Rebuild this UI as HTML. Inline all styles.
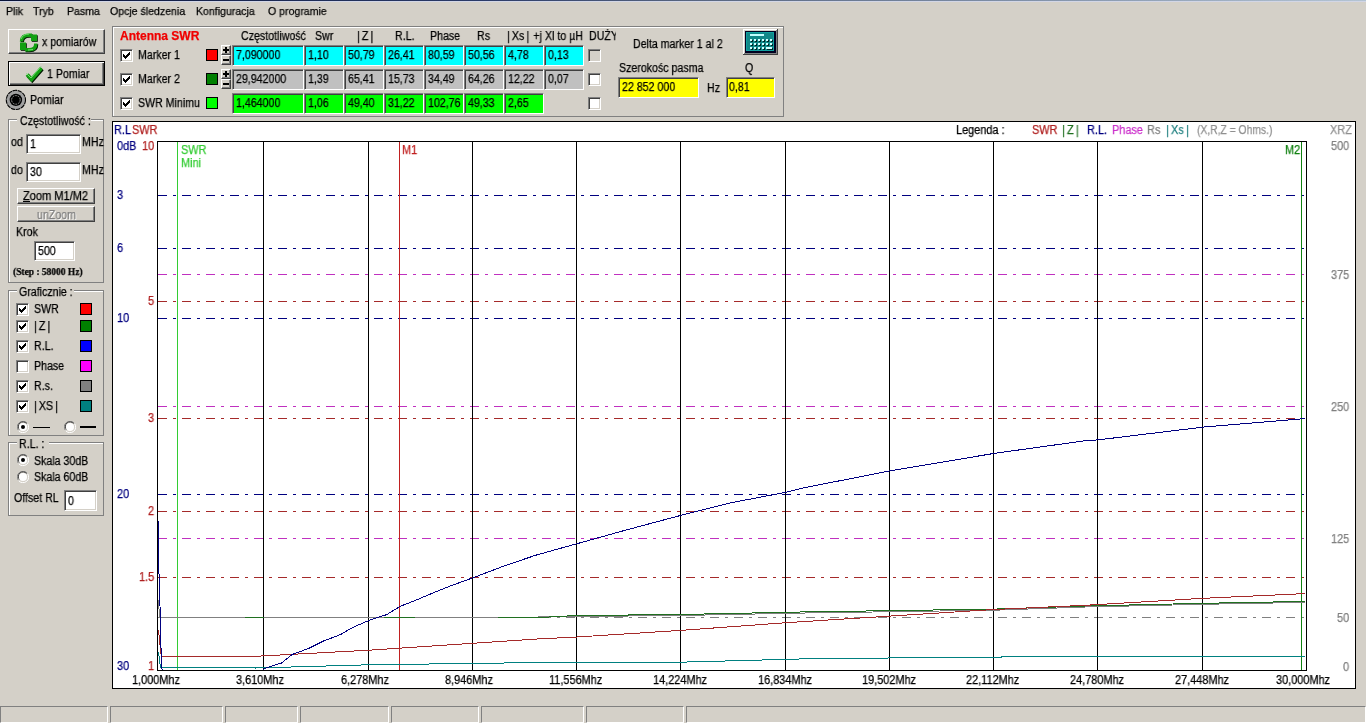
<!DOCTYPE html><html><head><meta charset="utf-8"><style>
html,body{margin:0;padding:0;}
body{width:1366px;height:723px;overflow:hidden;background:#d4d0c8;position:relative;font-family:"Liberation Sans", sans-serif;}
.t{position:absolute;white-space:pre;line-height:1;-webkit-font-smoothing:antialiased;will-change:transform;-webkit-text-stroke:0.25px currentColor;}
</style></head><body>
<div style="position:absolute;left:0px;top:0px;width:1366px;height:1px;background:linear-gradient(90deg,#081236 0%,#2a3a68 35%,#56647f 50%,#8090a8 75%,#b4c4d4 100%);"></div>
<div style="position:absolute;left:0px;top:1px;width:1366px;height:1px;background:#d2d6e6;"></div>
<div class="t" style="left:6px;top:5.69px;font-size:11px;color:#000;transform:scaleX(0.96);transform-origin:0 0;">Plik</div>
<div class="t" style="left:33px;top:5.69px;font-size:11px;color:#000;transform:scaleX(0.96);transform-origin:0 0;">Tryb</div>
<div class="t" style="left:67px;top:5.69px;font-size:11px;color:#000;transform:scaleX(0.96);transform-origin:0 0;">Pasma</div>
<div class="t" style="left:110px;top:5.69px;font-size:11px;color:#000;transform:scaleX(0.96);transform-origin:0 0;">Opcje śledzenia</div>
<div class="t" style="left:196px;top:5.69px;font-size:11px;color:#000;transform:scaleX(0.96);transform-origin:0 0;">Konfiguracja</div>
<div class="t" style="left:268px;top:5.69px;font-size:11px;color:#000;transform:scaleX(0.96);transform-origin:0 0;">O programie</div>
<div style="position:absolute;left:8px;top:29px;width:97px;height:25px;background:#d4d0c8;box-sizing:border-box;border-style:solid;border-width:1px;border-color:#fff #404040 #404040 #fff;box-shadow:inset -1px -1px 0 #808080;"></div>
<div class="t" style="left:42px;top:35.84px;font-size:12px;color:#000;transform:scaleX(0.885);transform-origin:0 0;">x pomiarów</div>
<div style="position:absolute;left:8px;top:61px;width:97px;height:25px;background:#d4d0c8;box-sizing:border-box;border:1px solid #000;box-shadow:inset 1px 1px 0 #fff, inset -1px -1px 0 #404040, inset -2px -2px 0 #808080;"></div>
<div class="t" style="left:47px;top:67.84px;font-size:12px;color:#000;transform:scaleX(0.885);transform-origin:0 0;">1 Pomiar</div>
<svg style="position:absolute;left:16px;top:30px" width="26" height="24" viewBox="0 0 26 24">
<g transform="translate(0.8,0.8)" fill="none" stroke="#001800" stroke-width="3.4">
<path d="M5.5 11.5 C5.5 7, 8.5 5.2, 12.5 5.2 L16 5.2"/>
<path d="M19.8 13.5 C19.8 18, 17 19.8, 13 19.8 L9 19.8"/>
</g>
<g transform="translate(0.8,0.8)" fill="#001800"><rect x="15" y="4.5" width="6" height="6.5"/><rect x="4" y="12.5" width="6" height="7.5"/></g>
<g fill="none" stroke="#12a012" stroke-width="3.4">
<path d="M5.5 11.5 C5.5 7, 8.5 5.2, 12.5 5.2 L16 5.2"/>
<path d="M19.8 13.5 C19.8 18, 17 19.8, 13 19.8 L9 19.8"/>
</g>
<g fill="#12a012"><rect x="15" y="4.5" width="6" height="6.5"/><rect x="4" y="12.5" width="6" height="7.5"/></g>
<path d="M5 9 C6 6, 9 4, 13 4" fill="none" stroke="#70e070" stroke-width="1"/>
<path d="M12 20 L17 19.5" fill="none" stroke="#70e070" stroke-width="1"/>
</svg>
<svg style="position:absolute;left:22px;top:62px" width="26" height="22" viewBox="0 0 26 22">
<path d="M5 12.5 L9.5 17.5 L19.5 6" fill="none" stroke="#001800" stroke-width="3.6" transform="translate(0.8,1)"/>
<path d="M5 12.5 L9.5 17.5 L19.5 6" fill="none" stroke="#14a014" stroke-width="3.6"/>
<path d="M4.5 11.5 L9 16 L19 4.5" fill="none" stroke="#70e070" stroke-width="1"/>
</svg>
<svg style="position:absolute;left:5px;top:89px" width="22" height="22" viewBox="0 0 22 22">
<circle cx="10.9" cy="10.9" r="9.6" fill="#a0a0a0" stroke="#000" stroke-width="1.1" stroke-dasharray="4.5 0.7"/>
<circle cx="10.9" cy="10.9" r="6.2" fill="#000"/>
<circle cx="10.9" cy="10.9" r="3.6" fill="#000"/>
<circle cx="10.9" cy="10.9" r="4.3" fill="none" stroke="#a8a8a8" stroke-width="0.9" stroke-dasharray="1.8 0.9"/>
</svg>
<div class="t" style="left:30px;top:93.84px;font-size:12px;color:#000;transform:scaleX(0.885);transform-origin:0 0;">Pomiar</div>
<div style="position:absolute;left:113px;top:27px;width:671px;height:90px;border:1px solid #fff;box-sizing:border-box;"></div>
<div style="position:absolute;left:112px;top:26px;width:672px;height:91px;border:1px solid #808080;box-sizing:border-box;"></div>
<div class="t" style="left:120px;top:29.84px;font-size:12px;color:#f00000;font-weight:700;">Antenna SWR</div>
<div class="t" style="left:241px;top:29.84px;font-size:12px;color:#000;transform:scaleX(0.885);transform-origin:0 0;">Częstotliwość</div>
<div class="t" style="left:315px;top:29.84px;font-size:12px;color:#000;transform:scaleX(0.885);transform-origin:0 0;">Swr</div>
<div class="t" style="left:357px;top:29.84px;font-size:12px;color:#000;transform:scaleX(0.885);transform-origin:0 0;">|&#8201;Z&#8201;|</div>
<div class="t" style="left:395px;top:29.84px;font-size:12px;color:#000;transform:scaleX(0.885);transform-origin:0 0;">R.L.</div>
<div class="t" style="left:430px;top:29.84px;font-size:12px;color:#000;transform:scaleX(0.885);transform-origin:0 0;">Phase</div>
<div class="t" style="left:477px;top:29.84px;font-size:12px;color:#000;transform:scaleX(0.885);transform-origin:0 0;">Rs</div>
<div class="t" style="left:507px;top:29.84px;font-size:12px;color:#000;transform:scaleX(0.885);transform-origin:0 0;">|&#8201;Xs&#8201;|&#8201;&#8201;+j</div>
<div class="t" style="left:545px;top:29.84px;font-size:12px;color:#000;transform:scaleX(0.885);transform-origin:0 0;">Xl to µH</div>
<div class="t" style="left:589px;top:29.84px;font-size:12px;color:#000;transform:scaleX(0.885);transform-origin:0 0;width:31px;overflow:hidden;padding-top:4px;margin-top:-4px;">DUŻY</div>
<div style="position:absolute;left:120px;top:49px;width:13px;height:13px;background:#fff;box-sizing:border-box;border-style:solid;border-width:1px;border-color:#808080 #fff #fff #808080;box-shadow:inset 1px 1px 0 #404040, inset -1px -1px 0 #d4d0c8;"></div>
<div style="position:absolute;left:123px;top:54px;width:1px;height:3px;background:#000;"></div>
<div style="position:absolute;left:124px;top:55px;width:1px;height:3px;background:#000;"></div>
<div style="position:absolute;left:125px;top:56px;width:1px;height:3px;background:#000;"></div>
<div style="position:absolute;left:126px;top:55px;width:1px;height:3px;background:#000;"></div>
<div style="position:absolute;left:127px;top:54px;width:1px;height:3px;background:#000;"></div>
<div style="position:absolute;left:128px;top:53px;width:1px;height:3px;background:#000;"></div>
<div style="position:absolute;left:129px;top:52px;width:1px;height:3px;background:#000;"></div>
<div class="t" style="left:138px;top:48.84px;font-size:12px;color:#000;transform:scaleX(0.885);transform-origin:0 0;">Marker 1</div>
<div style="position:absolute;left:206px;top:49px;width:12px;height:12px;background:#ff0000;border:1px solid #000;box-sizing:border-box;"></div>
<div style="position:absolute;left:221px;top:45px;width:10px;height:10px;background:#d4d0c8;box-sizing:border-box;border-style:solid;border-width:1px;border-color:#fff #404040 #404040 #fff;box-shadow:inset -1px -1px 0 #808080;"></div>
<div style="position:absolute;left:221px;top:55px;width:10px;height:10px;background:#d4d0c8;box-sizing:border-box;border-style:solid;border-width:1px;border-color:#fff #404040 #404040 #fff;box-shadow:inset -1px -1px 0 #808080;"></div>
<div style="position:absolute;left:223px;top:49px;width:6px;height:2px;background:#000;"></div>
<div style="position:absolute;left:225px;top:47px;width:2px;height:6px;background:#000;"></div>
<div style="position:absolute;left:223px;top:59px;width:6px;height:2px;background:#000;"></div>
<div style="position:absolute;left:232px;top:45px;width:72px;height:21px;background:#00ffff;box-sizing:border-box;border-style:solid;border-width:1px;border-color:#808080 #fff #fff #808080;box-shadow:inset 1px 1px 0 #404040;"></div>
<div class="t" style="left:236px;top:48.84px;font-size:12px;color:#000;transform:scaleX(0.885);transform-origin:0 0;">7,090000</div>
<div style="position:absolute;left:304px;top:45px;width:40px;height:21px;background:#00ffff;box-sizing:border-box;border-style:solid;border-width:1px;border-color:#808080 #fff #fff #808080;box-shadow:inset 1px 1px 0 #404040;"></div>
<div class="t" style="left:308px;top:48.84px;font-size:12px;color:#000;transform:scaleX(0.885);transform-origin:0 0;">1,10</div>
<div style="position:absolute;left:344px;top:45px;width:40px;height:21px;background:#00ffff;box-sizing:border-box;border-style:solid;border-width:1px;border-color:#808080 #fff #fff #808080;box-shadow:inset 1px 1px 0 #404040;"></div>
<div class="t" style="left:348px;top:48.84px;font-size:12px;color:#000;transform:scaleX(0.885);transform-origin:0 0;">50,79</div>
<div style="position:absolute;left:384px;top:45px;width:40px;height:21px;background:#00ffff;box-sizing:border-box;border-style:solid;border-width:1px;border-color:#808080 #fff #fff #808080;box-shadow:inset 1px 1px 0 #404040;"></div>
<div class="t" style="left:388px;top:48.84px;font-size:12px;color:#000;transform:scaleX(0.885);transform-origin:0 0;">26,41</div>
<div style="position:absolute;left:424px;top:45px;width:40px;height:21px;background:#00ffff;box-sizing:border-box;border-style:solid;border-width:1px;border-color:#808080 #fff #fff #808080;box-shadow:inset 1px 1px 0 #404040;"></div>
<div class="t" style="left:428px;top:48.84px;font-size:12px;color:#000;transform:scaleX(0.885);transform-origin:0 0;">80,59</div>
<div style="position:absolute;left:464px;top:45px;width:40px;height:21px;background:#00ffff;box-sizing:border-box;border-style:solid;border-width:1px;border-color:#808080 #fff #fff #808080;box-shadow:inset 1px 1px 0 #404040;"></div>
<div class="t" style="left:468px;top:48.84px;font-size:12px;color:#000;transform:scaleX(0.885);transform-origin:0 0;">50,56</div>
<div style="position:absolute;left:504px;top:45px;width:40px;height:21px;background:#00ffff;box-sizing:border-box;border-style:solid;border-width:1px;border-color:#808080 #fff #fff #808080;box-shadow:inset 1px 1px 0 #404040;"></div>
<div class="t" style="left:508px;top:48.84px;font-size:12px;color:#000;transform:scaleX(0.885);transform-origin:0 0;">4,78</div>
<div style="position:absolute;left:544px;top:45px;width:40px;height:21px;background:#00ffff;box-sizing:border-box;border-style:solid;border-width:1px;border-color:#808080 #fff #fff #808080;box-shadow:inset 1px 1px 0 #404040;"></div>
<div class="t" style="left:548px;top:48.84px;font-size:12px;color:#000;transform:scaleX(0.885);transform-origin:0 0;">0,13</div>
<div style="position:absolute;left:588px;top:49px;width:13px;height:13px;background:#d4d0c8;box-sizing:border-box;border-style:solid;border-width:1px;border-color:#808080 #fff #fff #808080;box-shadow:inset 1px 1px 0 #404040, inset -1px -1px 0 #d4d0c8;"></div>
<div style="position:absolute;left:120px;top:73px;width:13px;height:13px;background:#fff;box-sizing:border-box;border-style:solid;border-width:1px;border-color:#808080 #fff #fff #808080;box-shadow:inset 1px 1px 0 #404040, inset -1px -1px 0 #d4d0c8;"></div>
<div style="position:absolute;left:123px;top:78px;width:1px;height:3px;background:#000;"></div>
<div style="position:absolute;left:124px;top:79px;width:1px;height:3px;background:#000;"></div>
<div style="position:absolute;left:125px;top:80px;width:1px;height:3px;background:#000;"></div>
<div style="position:absolute;left:126px;top:79px;width:1px;height:3px;background:#000;"></div>
<div style="position:absolute;left:127px;top:78px;width:1px;height:3px;background:#000;"></div>
<div style="position:absolute;left:128px;top:77px;width:1px;height:3px;background:#000;"></div>
<div style="position:absolute;left:129px;top:76px;width:1px;height:3px;background:#000;"></div>
<div class="t" style="left:138px;top:72.84px;font-size:12px;color:#000;transform:scaleX(0.885);transform-origin:0 0;">Marker 2</div>
<div style="position:absolute;left:206px;top:73px;width:12px;height:12px;background:#008000;border:1px solid #000;box-sizing:border-box;"></div>
<div style="position:absolute;left:221px;top:69px;width:10px;height:10px;background:#d4d0c8;box-sizing:border-box;border-style:solid;border-width:1px;border-color:#fff #404040 #404040 #fff;box-shadow:inset -1px -1px 0 #808080;"></div>
<div style="position:absolute;left:221px;top:79px;width:10px;height:10px;background:#d4d0c8;box-sizing:border-box;border-style:solid;border-width:1px;border-color:#fff #404040 #404040 #fff;box-shadow:inset -1px -1px 0 #808080;"></div>
<div style="position:absolute;left:223px;top:73px;width:6px;height:2px;background:#000;"></div>
<div style="position:absolute;left:225px;top:71px;width:2px;height:6px;background:#000;"></div>
<div style="position:absolute;left:223px;top:83px;width:6px;height:2px;background:#000;"></div>
<div style="position:absolute;left:232px;top:69px;width:72px;height:21px;background:#c0c0c0;box-sizing:border-box;border-style:solid;border-width:1px;border-color:#808080 #fff #fff #808080;box-shadow:inset 1px 1px 0 #404040;"></div>
<div class="t" style="left:236px;top:72.84px;font-size:12px;color:#000;transform:scaleX(0.885);transform-origin:0 0;">29,942000</div>
<div style="position:absolute;left:304px;top:69px;width:40px;height:21px;background:#c0c0c0;box-sizing:border-box;border-style:solid;border-width:1px;border-color:#808080 #fff #fff #808080;box-shadow:inset 1px 1px 0 #404040;"></div>
<div class="t" style="left:308px;top:72.84px;font-size:12px;color:#000;transform:scaleX(0.885);transform-origin:0 0;">1,39</div>
<div style="position:absolute;left:344px;top:69px;width:40px;height:21px;background:#c0c0c0;box-sizing:border-box;border-style:solid;border-width:1px;border-color:#808080 #fff #fff #808080;box-shadow:inset 1px 1px 0 #404040;"></div>
<div class="t" style="left:348px;top:72.84px;font-size:12px;color:#000;transform:scaleX(0.885);transform-origin:0 0;">65,41</div>
<div style="position:absolute;left:384px;top:69px;width:40px;height:21px;background:#c0c0c0;box-sizing:border-box;border-style:solid;border-width:1px;border-color:#808080 #fff #fff #808080;box-shadow:inset 1px 1px 0 #404040;"></div>
<div class="t" style="left:388px;top:72.84px;font-size:12px;color:#000;transform:scaleX(0.885);transform-origin:0 0;">15,73</div>
<div style="position:absolute;left:424px;top:69px;width:40px;height:21px;background:#c0c0c0;box-sizing:border-box;border-style:solid;border-width:1px;border-color:#808080 #fff #fff #808080;box-shadow:inset 1px 1px 0 #404040;"></div>
<div class="t" style="left:428px;top:72.84px;font-size:12px;color:#000;transform:scaleX(0.885);transform-origin:0 0;">34,49</div>
<div style="position:absolute;left:464px;top:69px;width:40px;height:21px;background:#c0c0c0;box-sizing:border-box;border-style:solid;border-width:1px;border-color:#808080 #fff #fff #808080;box-shadow:inset 1px 1px 0 #404040;"></div>
<div class="t" style="left:468px;top:72.84px;font-size:12px;color:#000;transform:scaleX(0.885);transform-origin:0 0;">64,26</div>
<div style="position:absolute;left:504px;top:69px;width:40px;height:21px;background:#c0c0c0;box-sizing:border-box;border-style:solid;border-width:1px;border-color:#808080 #fff #fff #808080;box-shadow:inset 1px 1px 0 #404040;"></div>
<div class="t" style="left:508px;top:72.84px;font-size:12px;color:#000;transform:scaleX(0.885);transform-origin:0 0;">12,22</div>
<div style="position:absolute;left:544px;top:69px;width:40px;height:21px;background:#c0c0c0;box-sizing:border-box;border-style:solid;border-width:1px;border-color:#808080 #fff #fff #808080;box-shadow:inset 1px 1px 0 #404040;"></div>
<div class="t" style="left:548px;top:72.84px;font-size:12px;color:#000;transform:scaleX(0.885);transform-origin:0 0;">0,07</div>
<div style="position:absolute;left:588px;top:73px;width:13px;height:13px;background:#fff;box-sizing:border-box;border-style:solid;border-width:1px;border-color:#808080 #fff #fff #808080;box-shadow:inset 1px 1px 0 #404040, inset -1px -1px 0 #d4d0c8;"></div>
<div style="position:absolute;left:120px;top:97px;width:13px;height:13px;background:#fff;box-sizing:border-box;border-style:solid;border-width:1px;border-color:#808080 #fff #fff #808080;box-shadow:inset 1px 1px 0 #404040, inset -1px -1px 0 #d4d0c8;"></div>
<div style="position:absolute;left:123px;top:102px;width:1px;height:3px;background:#000;"></div>
<div style="position:absolute;left:124px;top:103px;width:1px;height:3px;background:#000;"></div>
<div style="position:absolute;left:125px;top:104px;width:1px;height:3px;background:#000;"></div>
<div style="position:absolute;left:126px;top:103px;width:1px;height:3px;background:#000;"></div>
<div style="position:absolute;left:127px;top:102px;width:1px;height:3px;background:#000;"></div>
<div style="position:absolute;left:128px;top:101px;width:1px;height:3px;background:#000;"></div>
<div style="position:absolute;left:129px;top:100px;width:1px;height:3px;background:#000;"></div>
<div class="t" style="left:138px;top:96.84px;font-size:12px;color:#000;transform:scaleX(0.885);transform-origin:0 0;">SWR Minimu</div>
<div style="position:absolute;left:206px;top:97px;width:12px;height:12px;background:#00ff00;border:1px solid #000;box-sizing:border-box;"></div>
<div style="position:absolute;left:232px;top:93px;width:72px;height:21px;background:#00ff00;box-sizing:border-box;border-style:solid;border-width:1px;border-color:#808080 #fff #fff #808080;box-shadow:inset 1px 1px 0 #404040;"></div>
<div class="t" style="left:236px;top:96.84px;font-size:12px;color:#000;transform:scaleX(0.885);transform-origin:0 0;">1,464000</div>
<div style="position:absolute;left:304px;top:93px;width:40px;height:21px;background:#00ff00;box-sizing:border-box;border-style:solid;border-width:1px;border-color:#808080 #fff #fff #808080;box-shadow:inset 1px 1px 0 #404040;"></div>
<div class="t" style="left:308px;top:96.84px;font-size:12px;color:#000;transform:scaleX(0.885);transform-origin:0 0;">1,06</div>
<div style="position:absolute;left:344px;top:93px;width:40px;height:21px;background:#00ff00;box-sizing:border-box;border-style:solid;border-width:1px;border-color:#808080 #fff #fff #808080;box-shadow:inset 1px 1px 0 #404040;"></div>
<div class="t" style="left:348px;top:96.84px;font-size:12px;color:#000;transform:scaleX(0.885);transform-origin:0 0;">49,40</div>
<div style="position:absolute;left:384px;top:93px;width:40px;height:21px;background:#00ff00;box-sizing:border-box;border-style:solid;border-width:1px;border-color:#808080 #fff #fff #808080;box-shadow:inset 1px 1px 0 #404040;"></div>
<div class="t" style="left:388px;top:96.84px;font-size:12px;color:#000;transform:scaleX(0.885);transform-origin:0 0;">31,22</div>
<div style="position:absolute;left:424px;top:93px;width:40px;height:21px;background:#00ff00;box-sizing:border-box;border-style:solid;border-width:1px;border-color:#808080 #fff #fff #808080;box-shadow:inset 1px 1px 0 #404040;"></div>
<div class="t" style="left:428px;top:96.84px;font-size:12px;color:#000;transform:scaleX(0.885);transform-origin:0 0;">102,76</div>
<div style="position:absolute;left:464px;top:93px;width:40px;height:21px;background:#00ff00;box-sizing:border-box;border-style:solid;border-width:1px;border-color:#808080 #fff #fff #808080;box-shadow:inset 1px 1px 0 #404040;"></div>
<div class="t" style="left:468px;top:96.84px;font-size:12px;color:#000;transform:scaleX(0.885);transform-origin:0 0;">49,33</div>
<div style="position:absolute;left:504px;top:93px;width:40px;height:21px;background:#00ff00;box-sizing:border-box;border-style:solid;border-width:1px;border-color:#808080 #fff #fff #808080;box-shadow:inset 1px 1px 0 #404040;"></div>
<div class="t" style="left:508px;top:96.84px;font-size:12px;color:#000;transform:scaleX(0.885);transform-origin:0 0;">2,65</div>
<div style="position:absolute;left:588px;top:97px;width:13px;height:13px;background:#fff;box-sizing:border-box;border-style:solid;border-width:1px;border-color:#808080 #fff #fff #808080;box-shadow:inset 1px 1px 0 #404040, inset -1px -1px 0 #d4d0c8;"></div>
<div class="t" style="left:633px;top:37.84px;font-size:12px;color:#000;transform:scaleX(0.885);transform-origin:0 0;">Delta marker 1 al 2</div>
<svg style="position:absolute;left:743px;top:29px" width="35" height="26" viewBox="0 0 35 26" shape-rendering="crispEdges">
<rect x="0" y="0" width="35" height="26" fill="#404040"/>
<rect x="0" y="0" width="34" height="25" fill="#fff"/>
<rect x="1" y="1" width="33" height="24" fill="#808080"/>
<rect x="1" y="1" width="32" height="23" fill="#d4d0c8"/>
<rect x="2" y="2" width="31" height="22" fill="#000020"/>
<rect x="3" y="3" width="28" height="19" fill="#10a0a0"/>
<rect x="4" y="4" width="26" height="17" fill="#108888"/>
<rect x="7" y="5" width="14" height="2" fill="#c0ffff"/>
<rect x="8" y="11" width="2" height="2" fill="#002828"/><rect x="7" y="10" width="2" height="2" fill="#d0ffff"/><rect x="12" y="11" width="2" height="2" fill="#002828"/><rect x="11" y="10" width="2" height="2" fill="#d0ffff"/><rect x="16" y="11" width="2" height="2" fill="#002828"/><rect x="15" y="10" width="2" height="2" fill="#d0ffff"/><rect x="20" y="11" width="2" height="2" fill="#002828"/><rect x="19" y="10" width="2" height="2" fill="#d0ffff"/><rect x="24" y="11" width="2" height="2" fill="#002828"/><rect x="23" y="10" width="2" height="2" fill="#d0ffff"/><rect x="28" y="11" width="2" height="2" fill="#002828"/><rect x="27" y="10" width="2" height="2" fill="#d0ffff"/><rect x="8" y="15" width="2" height="2" fill="#002828"/><rect x="7" y="14" width="2" height="2" fill="#d0ffff"/><rect x="12" y="15" width="2" height="2" fill="#002828"/><rect x="11" y="14" width="2" height="2" fill="#d0ffff"/><rect x="16" y="15" width="2" height="2" fill="#002828"/><rect x="15" y="14" width="2" height="2" fill="#d0ffff"/><rect x="20" y="15" width="2" height="2" fill="#002828"/><rect x="19" y="14" width="2" height="2" fill="#d0ffff"/><rect x="24" y="15" width="2" height="2" fill="#002828"/><rect x="23" y="14" width="2" height="2" fill="#d0ffff"/><rect x="28" y="15" width="2" height="2" fill="#002828"/><rect x="27" y="14" width="2" height="2" fill="#d0ffff"/><rect x="8" y="19" width="2" height="2" fill="#002828"/><rect x="7" y="18" width="2" height="2" fill="#d0ffff"/><rect x="12" y="19" width="2" height="2" fill="#002828"/><rect x="11" y="18" width="2" height="2" fill="#d0ffff"/><rect x="16" y="19" width="2" height="2" fill="#002828"/><rect x="15" y="18" width="2" height="2" fill="#d0ffff"/><rect x="20" y="19" width="2" height="2" fill="#002828"/><rect x="19" y="18" width="2" height="2" fill="#d0ffff"/><rect x="24" y="19" width="6" height="2" fill="#002828"/><rect x="23" y="18" width="6" height="2" fill="#d0ffff"/>
</svg>
<div class="t" style="left:619px;top:61.84px;font-size:12px;color:#000;transform:scaleX(0.885);transform-origin:0 0;">Szerokośc pasma</div>
<div class="t" style="left:745px;top:61.84px;font-size:12px;color:#000;transform:scaleX(0.885);transform-origin:0 0;">Q</div>
<div style="position:absolute;left:618px;top:77px;width:81px;height:21px;background:#ffff00;box-sizing:border-box;border-style:solid;border-width:1px;border-color:#808080 #fff #fff #808080;box-shadow:inset 1px 1px 0 #404040;"></div>
<div class="t" style="left:622px;top:80.84px;font-size:12px;color:#000;transform:scaleX(0.885);transform-origin:0 0;">22 852 000</div>
<div class="t" style="left:707px;top:81.84px;font-size:12px;color:#000;transform:scaleX(0.885);transform-origin:0 0;">Hz</div>
<div style="position:absolute;left:726px;top:77px;width:49px;height:21px;background:#ffff00;box-sizing:border-box;border-style:solid;border-width:1px;border-color:#808080 #fff #fff #808080;box-shadow:inset 1px 1px 0 #404040;"></div>
<div class="t" style="left:729px;top:80.84px;font-size:12px;color:#000;transform:scaleX(0.885);transform-origin:0 0;">0,81</div>
<div style="position:absolute;left:9px;top:120px;width:95px;height:163px;border:1px solid #fff;box-sizing:border-box;"></div>
<div style="position:absolute;left:8px;top:119px;width:96px;height:164px;border:1px solid #808080;box-sizing:border-box;"></div>
<div style="position:absolute;left:17px;top:117px;width:74px;height:5px;background:#d4d0c8;"></div>
<div class="t" style="left:20px;top:114.84px;font-size:12px;color:#000;transform:scaleX(0.885);transform-origin:0 0;">Częstotliwość :</div>
<div class="t" style="left:11px;top:135.84px;font-size:12px;color:#000;transform:scaleX(0.885);transform-origin:0 0;">od</div>
<div style="position:absolute;left:26px;top:134px;width:55px;height:20px;background:#fff;box-sizing:border-box;border-style:solid;border-width:1px;border-color:#808080 #fff #fff #808080;box-shadow:inset 1px 1px 0 #404040, inset -1px -1px 0 #d4d0c8;"></div>
<div class="t" style="left:30px;top:137.84px;font-size:12px;color:#000;transform:scaleX(0.885);transform-origin:0 0;">1</div>
<div class="t" style="left:82px;top:135.84px;font-size:12px;color:#000;transform:scaleX(0.885);transform-origin:0 0;">MHz</div>
<div class="t" style="left:11px;top:163.84px;font-size:12px;color:#000;transform:scaleX(0.885);transform-origin:0 0;">do</div>
<div style="position:absolute;left:26px;top:162px;width:55px;height:20px;background:#fff;box-sizing:border-box;border-style:solid;border-width:1px;border-color:#808080 #fff #fff #808080;box-shadow:inset 1px 1px 0 #404040, inset -1px -1px 0 #d4d0c8;"></div>
<div class="t" style="left:30px;top:165.84px;font-size:12px;color:#000;transform:scaleX(0.885);transform-origin:0 0;">30</div>
<div class="t" style="left:82px;top:163.84px;font-size:12px;color:#000;transform:scaleX(0.885);transform-origin:0 0;">MHz</div>
<div style="position:absolute;left:17px;top:188px;width:78px;height:16px;background:#d4d0c8;box-sizing:border-box;border-style:solid;border-width:1px;border-color:#fff #404040 #404040 #fff;box-shadow:inset -1px -1px 0 #808080;"></div>
<div class="t" style="left:23px;top:189.84px;font-size:12px;color:#000;transform:scaleX(0.92);transform-origin:0 0;">Zoom M1/M2</div>
<div style="position:absolute;left:23px;top:201px;width:7px;height:1px;background:#000;"></div>
<div style="position:absolute;left:17px;top:206px;width:78px;height:16px;background:#d4d0c8;box-sizing:border-box;border-style:solid;border-width:1px;border-color:#fff #404040 #404040 #fff;box-shadow:inset -1px -1px 0 #808080;"></div>
<div class="t" style="left:37px;top:208.84px;font-size:12px;color:#808080;transform:scaleX(0.885);transform-origin:0 0;text-shadow:1px 1px 0 #fff;">unZoom</div>
<div class="t" style="left:16px;top:225.84px;font-size:12px;color:#000;transform:scaleX(0.885);transform-origin:0 0;">Krok</div>
<div style="position:absolute;left:34px;top:241px;width:41px;height:20px;background:#fff;box-sizing:border-box;border-style:solid;border-width:1px;border-color:#808080 #fff #fff #808080;box-shadow:inset 1px 1px 0 #404040, inset -1px -1px 0 #d4d0c8;"></div>
<div class="t" style="left:38px;top:244.84px;font-size:12px;color:#000;transform:scaleX(0.885);transform-origin:0 0;">500</div>
<div class="t" style="left:13px;top:265.69px;font-size:11px;color:#000;transform:scaleX(0.86);transform-origin:0 0;font-weight:700;font-family:'Liberation Serif', serif;">(Step : 58000 Hz)</div>
<div style="position:absolute;left:9px;top:291px;width:95px;height:145px;border:1px solid #fff;box-sizing:border-box;"></div>
<div style="position:absolute;left:8px;top:290px;width:96px;height:146px;border:1px solid #808080;box-sizing:border-box;"></div>
<div style="position:absolute;left:17px;top:288px;width:57px;height:5px;background:#d4d0c8;"></div>
<div class="t" style="left:19px;top:285.84px;font-size:12px;color:#000;transform:scaleX(0.885);transform-origin:0 0;">Graficznie :</div>
<div style="position:absolute;left:16px;top:303px;width:13px;height:13px;background:#fff;box-sizing:border-box;border-style:solid;border-width:1px;border-color:#808080 #fff #fff #808080;box-shadow:inset 1px 1px 0 #404040, inset -1px -1px 0 #d4d0c8;"></div>
<div style="position:absolute;left:19px;top:308px;width:1px;height:3px;background:#000;"></div>
<div style="position:absolute;left:20px;top:309px;width:1px;height:3px;background:#000;"></div>
<div style="position:absolute;left:21px;top:310px;width:1px;height:3px;background:#000;"></div>
<div style="position:absolute;left:22px;top:309px;width:1px;height:3px;background:#000;"></div>
<div style="position:absolute;left:23px;top:308px;width:1px;height:3px;background:#000;"></div>
<div style="position:absolute;left:24px;top:307px;width:1px;height:3px;background:#000;"></div>
<div style="position:absolute;left:25px;top:306px;width:1px;height:3px;background:#000;"></div>
<div class="t" style="left:34px;top:302.84px;font-size:12px;color:#000;transform:scaleX(0.885);transform-origin:0 0;">SWR</div>
<div style="position:absolute;left:80px;top:303px;width:12px;height:12px;background:#ff0000;border:1px solid #000;box-sizing:border-box;"></div>
<div style="position:absolute;left:16px;top:320px;width:13px;height:13px;background:#fff;box-sizing:border-box;border-style:solid;border-width:1px;border-color:#808080 #fff #fff #808080;box-shadow:inset 1px 1px 0 #404040, inset -1px -1px 0 #d4d0c8;"></div>
<div style="position:absolute;left:19px;top:325px;width:1px;height:3px;background:#000;"></div>
<div style="position:absolute;left:20px;top:326px;width:1px;height:3px;background:#000;"></div>
<div style="position:absolute;left:21px;top:327px;width:1px;height:3px;background:#000;"></div>
<div style="position:absolute;left:22px;top:326px;width:1px;height:3px;background:#000;"></div>
<div style="position:absolute;left:23px;top:325px;width:1px;height:3px;background:#000;"></div>
<div style="position:absolute;left:24px;top:324px;width:1px;height:3px;background:#000;"></div>
<div style="position:absolute;left:25px;top:323px;width:1px;height:3px;background:#000;"></div>
<div class="t" style="left:34px;top:319.84px;font-size:12px;color:#000;transform:scaleX(0.885);transform-origin:0 0;">|&#8201;Z&#8201;|</div>
<div style="position:absolute;left:80px;top:320px;width:12px;height:12px;background:#008000;border:1px solid #000;box-sizing:border-box;"></div>
<div style="position:absolute;left:16px;top:340px;width:13px;height:13px;background:#fff;box-sizing:border-box;border-style:solid;border-width:1px;border-color:#808080 #fff #fff #808080;box-shadow:inset 1px 1px 0 #404040, inset -1px -1px 0 #d4d0c8;"></div>
<div style="position:absolute;left:19px;top:345px;width:1px;height:3px;background:#000;"></div>
<div style="position:absolute;left:20px;top:346px;width:1px;height:3px;background:#000;"></div>
<div style="position:absolute;left:21px;top:347px;width:1px;height:3px;background:#000;"></div>
<div style="position:absolute;left:22px;top:346px;width:1px;height:3px;background:#000;"></div>
<div style="position:absolute;left:23px;top:345px;width:1px;height:3px;background:#000;"></div>
<div style="position:absolute;left:24px;top:344px;width:1px;height:3px;background:#000;"></div>
<div style="position:absolute;left:25px;top:343px;width:1px;height:3px;background:#000;"></div>
<div class="t" style="left:34px;top:339.84px;font-size:12px;color:#000;transform:scaleX(0.885);transform-origin:0 0;">R.L.</div>
<div style="position:absolute;left:80px;top:340px;width:12px;height:12px;background:#0000ff;border:1px solid #000;box-sizing:border-box;"></div>
<div style="position:absolute;left:16px;top:360px;width:13px;height:13px;background:#fff;box-sizing:border-box;border-style:solid;border-width:1px;border-color:#808080 #fff #fff #808080;box-shadow:inset 1px 1px 0 #404040, inset -1px -1px 0 #d4d0c8;"></div>
<div class="t" style="left:34px;top:359.84px;font-size:12px;color:#000;transform:scaleX(0.885);transform-origin:0 0;">Phase</div>
<div style="position:absolute;left:80px;top:360px;width:12px;height:12px;background:#ff00ff;border:1px solid #000;box-sizing:border-box;"></div>
<div style="position:absolute;left:16px;top:380px;width:13px;height:13px;background:#fff;box-sizing:border-box;border-style:solid;border-width:1px;border-color:#808080 #fff #fff #808080;box-shadow:inset 1px 1px 0 #404040, inset -1px -1px 0 #d4d0c8;"></div>
<div style="position:absolute;left:19px;top:385px;width:1px;height:3px;background:#000;"></div>
<div style="position:absolute;left:20px;top:386px;width:1px;height:3px;background:#000;"></div>
<div style="position:absolute;left:21px;top:387px;width:1px;height:3px;background:#000;"></div>
<div style="position:absolute;left:22px;top:386px;width:1px;height:3px;background:#000;"></div>
<div style="position:absolute;left:23px;top:385px;width:1px;height:3px;background:#000;"></div>
<div style="position:absolute;left:24px;top:384px;width:1px;height:3px;background:#000;"></div>
<div style="position:absolute;left:25px;top:383px;width:1px;height:3px;background:#000;"></div>
<div class="t" style="left:34px;top:379.84px;font-size:12px;color:#000;transform:scaleX(0.885);transform-origin:0 0;">R.s.</div>
<div style="position:absolute;left:80px;top:380px;width:12px;height:12px;background:#808080;border:1px solid #000;box-sizing:border-box;"></div>
<div style="position:absolute;left:16px;top:400px;width:13px;height:13px;background:#fff;box-sizing:border-box;border-style:solid;border-width:1px;border-color:#808080 #fff #fff #808080;box-shadow:inset 1px 1px 0 #404040, inset -1px -1px 0 #d4d0c8;"></div>
<div style="position:absolute;left:19px;top:405px;width:1px;height:3px;background:#000;"></div>
<div style="position:absolute;left:20px;top:406px;width:1px;height:3px;background:#000;"></div>
<div style="position:absolute;left:21px;top:407px;width:1px;height:3px;background:#000;"></div>
<div style="position:absolute;left:22px;top:406px;width:1px;height:3px;background:#000;"></div>
<div style="position:absolute;left:23px;top:405px;width:1px;height:3px;background:#000;"></div>
<div style="position:absolute;left:24px;top:404px;width:1px;height:3px;background:#000;"></div>
<div style="position:absolute;left:25px;top:403px;width:1px;height:3px;background:#000;"></div>
<div class="t" style="left:34px;top:399.84px;font-size:12px;color:#000;transform:scaleX(0.885);transform-origin:0 0;">|&#8201;XS&#8201;|</div>
<div style="position:absolute;left:80px;top:400px;width:12px;height:12px;background:#008080;border:1px solid #000;box-sizing:border-box;"></div>
<svg style="position:absolute;left:17px;top:421px" width="12" height="12" viewBox="0 0 12 12">
<path d="M10.5 2.5 A5.5 5.5 0 0 0 1.5 9.5" fill="none" stroke="#808080" stroke-width="1"/>
<path d="M9.5 2.5 A4.5 4.5 0 0 0 2.5 8.5" fill="none" stroke="#404040" stroke-width="1"/>
<circle cx="6" cy="6" r="4" fill="#fff"/>
<path d="M1.5 9.5 A5.5 5.5 0 0 0 10.5 2.5" fill="none" stroke="#fff" stroke-width="1"/>
<circle cx="6" cy="6" r="2" fill="#000"/>
</svg>
<div style="position:absolute;left:33px;top:427px;width:17px;height:1px;background:#000;"></div>
<svg style="position:absolute;left:64px;top:421px" width="12" height="12" viewBox="0 0 12 12">
<path d="M10.5 2.5 A5.5 5.5 0 0 0 1.5 9.5" fill="none" stroke="#808080" stroke-width="1"/>
<path d="M9.5 2.5 A4.5 4.5 0 0 0 2.5 8.5" fill="none" stroke="#404040" stroke-width="1"/>
<circle cx="6" cy="6" r="4" fill="#fff"/>
<path d="M1.5 9.5 A5.5 5.5 0 0 0 10.5 2.5" fill="none" stroke="#fff" stroke-width="1"/>

</svg>
<div style="position:absolute;left:80px;top:426px;width:16px;height:2px;background:#000;"></div>
<div style="position:absolute;left:9px;top:443px;width:95px;height:73px;border:1px solid #fff;box-sizing:border-box;"></div>
<div style="position:absolute;left:8px;top:442px;width:96px;height:74px;border:1px solid #808080;box-sizing:border-box;"></div>
<div style="position:absolute;left:17px;top:440px;width:32px;height:5px;background:#d4d0c8;"></div>
<div class="t" style="left:19px;top:437.84px;font-size:12px;color:#000;transform:scaleX(0.885);transform-origin:0 0;">R.L. :</div>
<svg style="position:absolute;left:17px;top:454px" width="12" height="12" viewBox="0 0 12 12">
<path d="M10.5 2.5 A5.5 5.5 0 0 0 1.5 9.5" fill="none" stroke="#808080" stroke-width="1"/>
<path d="M9.5 2.5 A4.5 4.5 0 0 0 2.5 8.5" fill="none" stroke="#404040" stroke-width="1"/>
<circle cx="6" cy="6" r="4" fill="#fff"/>
<path d="M1.5 9.5 A5.5 5.5 0 0 0 10.5 2.5" fill="none" stroke="#fff" stroke-width="1"/>
<circle cx="6" cy="6" r="2" fill="#000"/>
</svg>
<div class="t" style="left:34px;top:454.84px;font-size:12px;color:#000;transform:scaleX(0.885);transform-origin:0 0;">Skala 30dB</div>
<svg style="position:absolute;left:17px;top:471px" width="12" height="12" viewBox="0 0 12 12">
<path d="M10.5 2.5 A5.5 5.5 0 0 0 1.5 9.5" fill="none" stroke="#808080" stroke-width="1"/>
<path d="M9.5 2.5 A4.5 4.5 0 0 0 2.5 8.5" fill="none" stroke="#404040" stroke-width="1"/>
<circle cx="6" cy="6" r="4" fill="#fff"/>
<path d="M1.5 9.5 A5.5 5.5 0 0 0 10.5 2.5" fill="none" stroke="#fff" stroke-width="1"/>

</svg>
<div class="t" style="left:34px;top:470.84px;font-size:12px;color:#000;transform:scaleX(0.885);transform-origin:0 0;">Skala 60dB</div>
<div class="t" style="left:14px;top:491.84px;font-size:12px;color:#000;transform:scaleX(0.885);transform-origin:0 0;">Offset RL</div>
<div style="position:absolute;left:64px;top:490px;width:33px;height:21px;background:#fff;box-sizing:border-box;border-style:solid;border-width:1px;border-color:#808080 #fff #fff #808080;box-shadow:inset 1px 1px 0 #404040, inset -1px -1px 0 #d4d0c8;"></div>
<div class="t" style="left:68px;top:494.84px;font-size:12px;color:#000;transform:scaleX(0.885);transform-origin:0 0;">0</div>
<div style="position:absolute;left:0px;top:706px;width:108px;height:17px;box-sizing:border-box;border-style:solid;border-width:1px;border-color:#808080 #fff #fff #808080;"></div>
<div style="position:absolute;left:110px;top:706px;width:113px;height:17px;box-sizing:border-box;border-style:solid;border-width:1px;border-color:#808080 #fff #fff #808080;"></div>
<div style="position:absolute;left:225px;top:706px;width:73px;height:17px;box-sizing:border-box;border-style:solid;border-width:1px;border-color:#808080 #fff #fff #808080;"></div>
<div style="position:absolute;left:300px;top:706px;width:89px;height:17px;box-sizing:border-box;border-style:solid;border-width:1px;border-color:#808080 #fff #fff #808080;"></div>
<div style="position:absolute;left:391px;top:706px;width:88px;height:17px;box-sizing:border-box;border-style:solid;border-width:1px;border-color:#808080 #fff #fff #808080;"></div>
<div style="position:absolute;left:481px;top:706px;width:103px;height:17px;box-sizing:border-box;border-style:solid;border-width:1px;border-color:#808080 #fff #fff #808080;"></div>
<div style="position:absolute;left:586px;top:706px;width:98px;height:17px;box-sizing:border-box;border-style:solid;border-width:1px;border-color:#808080 #fff #fff #808080;"></div>
<div style="position:absolute;left:686px;top:706px;width:680px;height:17px;box-sizing:border-box;border-style:solid;border-width:1px;border-color:#808080 #fff #fff #808080;"></div>
<svg style="position:absolute;left:0;top:0" width="1366" height="723" viewBox="0 0 1366 723" shape-rendering="crispEdges">
<rect x="112.5" y="121.5" width="1243" height="567" fill="#fff" stroke="#000"/>
<line x1="158" y1="195.5" x2="1304" y2="195.5" stroke="#000080" stroke-width="1" stroke-dasharray="9 6 3 6"/>
<line x1="158" y1="248.5" x2="1304" y2="248.5" stroke="#000080" stroke-width="1" stroke-dasharray="9 6 3 6"/>
<line x1="158" y1="274.5" x2="1304" y2="274.5" stroke="#c030c0" stroke-width="1" stroke-dasharray="9 6 3 6"/>
<line x1="158" y1="301.5" x2="1304" y2="301.5" stroke="#a52a2a" stroke-width="1" stroke-dasharray="9 6 3 6"/>
<line x1="158" y1="318.5" x2="1304" y2="318.5" stroke="#000080" stroke-width="1" stroke-dasharray="9 6 3 6"/>
<line x1="158" y1="406.5" x2="1304" y2="406.5" stroke="#c030c0" stroke-width="1" stroke-dasharray="9 6 3 6"/>
<line x1="158" y1="418.5" x2="1304" y2="418.5" stroke="#a52a2a" stroke-width="1" stroke-dasharray="9 6 3 6"/>
<line x1="158" y1="494.5" x2="1304" y2="494.5" stroke="#000080" stroke-width="1" stroke-dasharray="9 6 3 6"/>
<line x1="158" y1="511.5" x2="1304" y2="511.5" stroke="#a52a2a" stroke-width="1" stroke-dasharray="9 6 3 6"/>
<line x1="158" y1="538.5" x2="1304" y2="538.5" stroke="#c030c0" stroke-width="1" stroke-dasharray="9 6 3 6"/>
<line x1="158" y1="577.5" x2="1304" y2="577.5" stroke="#a52a2a" stroke-width="1" stroke-dasharray="9 6 3 6"/>
<line x1="158" y1="617.5" x2="1304" y2="617.5" stroke="#808080" stroke-width="1" stroke-dasharray="9 6 3 6"/>
<line x1="263.5" y1="141" x2="263.5" y2="670" stroke="#000"/>
<line x1="368.5" y1="141" x2="368.5" y2="670" stroke="#000"/>
<line x1="472.5" y1="141" x2="472.5" y2="670" stroke="#000"/>
<line x1="576.5" y1="141" x2="576.5" y2="670" stroke="#000"/>
<line x1="680.5" y1="141" x2="680.5" y2="670" stroke="#000"/>
<line x1="785.5" y1="141" x2="785.5" y2="670" stroke="#000"/>
<line x1="889.5" y1="141" x2="889.5" y2="670" stroke="#000"/>
<line x1="993.5" y1="141" x2="993.5" y2="670" stroke="#000"/>
<line x1="1097.5" y1="141" x2="1097.5" y2="670" stroke="#000"/>
<line x1="1202.5" y1="141" x2="1202.5" y2="670" stroke="#000"/>
<rect x="157.5" y="141.5" width="1149" height="529" fill="none" stroke="#000"/>
<line x1="177.5" y1="142" x2="177.5" y2="670" stroke="#33cc33"/>
<line x1="399.5" y1="142" x2="399.5" y2="670" stroke="#c02020"/>
<line x1="1301.5" y1="142" x2="1301.5" y2="670" stroke="#108010"/>
<polyline fill="none" stroke="#008080" stroke-width="1" points="158.5,652.0 160.5,667.5 255.5,668.0 368.5,664.8 535.5,662.6 680.5,662.2 810.5,658.7 1001.5,657.0 1085.5,656.6 1305.1,656.8"/>
<polyline fill="none" stroke="#808080" stroke-width="1" points="158.5,600.0 159.5,617.5 500.5,617.5 576.5,616.5 680.5,615.5 805.5,613.0 994.1,610.2 1085.5,607.0 1203.3,604.3 1305.1,602.4"/>
<polyline fill="none" stroke="#207020" stroke-width="1" points="497.5,617.5 540.5,617.5 576.5,615.5 680.5,614.5 805.5,611.9 994.1,609.1 1085.5,606.0 1203.3,603.3 1305.1,601.4"/>
<polyline fill="none" stroke="#207020" stroke-width="1" points="244.5,617.5 263.5,617.5"/>
<polyline fill="none" stroke="#207020" stroke-width="1" points="383.5,617.5 414.5,617.5"/>
<polyline fill="none" stroke="#a52a2a" stroke-width="1" points="158.5,630.0 160.5,650.0 161.5,657.0 255.5,656.3 368.9,650.2 472.7,643.3 535.5,639.1 577.0,637.0 680.8,630.4 786.1,622.7 889.9,616.1 994.1,609.5 1085.5,605.3 1203.3,598.3 1305.1,593.6"/>
<polyline fill="none" stroke="#000080" stroke-width="1" points="158.5,521.0 158.5,562.0 159.5,585.0 161.5,668.0 162.5,670.5 262.5,670.5 264.7,668.3 281.5,663.0 292.0,654.6 308.9,648.3 323.5,641.0 340.5,634.6 353.0,627.3 368.8,620.5 386.7,614.6 400.4,606.2 414.0,601.0 428.7,594.7 449.8,586.2 472.9,577.8 504.5,565.8 535.5,555.3 577.0,543.7 627.3,529.7 680.8,515.4 731.9,502.6 786.1,492.2 805.5,487.5 889.9,470.9 994.1,453.4 1085.5,440.7 1097.9,439.9 1203.3,427.1 1305.1,418.6"/>
<line x1="157" y1="670.5" x2="1307" y2="670.5" stroke="#000"/>
</svg>
<div class="t" style="left:114px;top:123.84px;font-size:12px;color:#000080;transform:scaleX(0.91);transform-origin:0 0;">R.L</div>
<div class="t" style="left:132px;top:123.84px;font-size:12px;color:#b02020;transform:scaleX(0.91);transform-origin:0 0;">SWR</div>
<div class="t" style="left:117px;top:139.84px;font-size:12px;color:#000080;transform:scaleX(0.91);transform-origin:0 0;">0dB</div>
<div class="t" style="left:142px;top:139.84px;font-size:12px;color:#b02020;transform:scaleX(0.91);transform-origin:0 0;">10</div>
<div class="t" style="left:117px;top:188.84px;font-size:12px;color:#000080;transform:scaleX(0.91);transform-origin:0 0;">3</div>
<div class="t" style="left:117px;top:241.84px;font-size:12px;color:#000080;transform:scaleX(0.91);transform-origin:0 0;">6</div>
<div class="t" style="left:117px;top:311.84px;font-size:12px;color:#000080;transform:scaleX(0.91);transform-origin:0 0;">10</div>
<div class="t" style="left:117px;top:487.84px;font-size:12px;color:#000080;transform:scaleX(0.91);transform-origin:0 0;">20</div>
<div class="t" style="left:117px;top:659.84px;font-size:12px;color:#000080;transform:scaleX(0.91);transform-origin:0 0;">30</div>
<div class="t" style="left:148px;top:294.84px;font-size:12px;color:#b02020;transform:scaleX(0.91);transform-origin:0 0;">5</div>
<div class="t" style="left:148px;top:411.84px;font-size:12px;color:#b02020;transform:scaleX(0.91);transform-origin:0 0;">3</div>
<div class="t" style="left:148px;top:504.84px;font-size:12px;color:#b02020;transform:scaleX(0.91);transform-origin:0 0;">2</div>
<div class="t" style="left:139px;top:570.84px;font-size:12px;color:#b02020;transform:scaleX(0.91);transform-origin:0 0;">1.5</div>
<div class="t" style="left:148px;top:659.84px;font-size:12px;color:#b02020;transform:scaleX(0.91);transform-origin:0 0;">1</div>
<div class="t" style="left:181px;top:143.84px;font-size:12px;color:#33cc33;transform:scaleX(0.91);transform-origin:0 0;">SWR</div>
<div class="t" style="left:181px;top:156.84px;font-size:12px;color:#33cc33;transform:scaleX(0.91);transform-origin:0 0;">Mini</div>
<div class="t" style="left:402px;top:143.84px;font-size:12px;color:#c02020;transform:scaleX(0.91);transform-origin:0 0;">M1</div>
<div class="t" style="left:1285px;top:143.84px;font-size:12px;color:#108010;transform:scaleX(0.91);transform-origin:0 0;">M2</div>
<div class="t" style="left:956px;top:123.84px;font-size:12px;color:#000;transform:scaleX(0.91);transform-origin:0 0;">Legenda :</div>
<div class="t" style="left:1032px;top:123.84px;font-size:12px;color:#b02020;transform:scaleX(0.91);transform-origin:0 0;">SWR</div>
<div class="t" style="left:1062px;top:123.84px;font-size:12px;color:#207020;transform:scaleX(0.91);transform-origin:0 0;">|&#8201;Z&#8201;|</div>
<div class="t" style="left:1087px;top:123.84px;font-size:12px;color:#000080;transform:scaleX(0.91);transform-origin:0 0;">R.L.</div>
<div class="t" style="left:1112px;top:123.84px;font-size:12px;color:#cc33cc;transform:scaleX(0.91);transform-origin:0 0;">Phase</div>
<div class="t" style="left:1147px;top:123.84px;font-size:12px;color:#808080;transform:scaleX(0.91);transform-origin:0 0;">Rs</div>
<div class="t" style="left:1166px;top:123.84px;font-size:12px;color:#208080;transform:scaleX(0.91);transform-origin:0 0;">|&#8201;Xs&#8201;|</div>
<div class="t" style="left:1197px;top:123.84px;font-size:12px;color:#909090;transform:scaleX(0.86);transform-origin:0 0;">(X,R,Z = Ohms.)</div>
<div class="t" style="left:1330px;top:123.84px;font-size:12px;color:#909090;transform:scaleX(0.91);transform-origin:0 0;">XRZ</div>
<div class="t" style="left:1331px;top:139.84px;font-size:12px;color:#808080;transform:scaleX(0.91);transform-origin:0 0;">500</div>
<div class="t" style="left:1331px;top:268.84px;font-size:12px;color:#808080;transform:scaleX(0.91);transform-origin:0 0;">375</div>
<div class="t" style="left:1331px;top:400.84px;font-size:12px;color:#808080;transform:scaleX(0.91);transform-origin:0 0;">250</div>
<div class="t" style="left:1331px;top:532.84px;font-size:12px;color:#808080;transform:scaleX(0.91);transform-origin:0 0;">125</div>
<div class="t" style="left:1337px;top:611.84px;font-size:12px;color:#808080;transform:scaleX(0.91);transform-origin:0 0;">50</div>
<div class="t" style="left:1343px;top:660.84px;font-size:12px;color:#808080;transform:scaleX(0.91);transform-origin:0 0;">0</div>
<div class="t" style="left:132px;top:673.84px;font-size:12px;color:#000;transform:scaleX(0.91);transform-origin:0 0;">1,000Mhz</div>
<div class="t" style="left:236px;top:673.84px;font-size:12px;color:#000;transform:scaleX(0.91);transform-origin:0 0;">3,610Mhz</div>
<div class="t" style="left:341px;top:673.84px;font-size:12px;color:#000;transform:scaleX(0.91);transform-origin:0 0;">6,278Mhz</div>
<div class="t" style="left:445px;top:673.84px;font-size:12px;color:#000;transform:scaleX(0.91);transform-origin:0 0;">8,946Mhz</div>
<div class="t" style="left:549px;top:673.84px;font-size:12px;color:#000;transform:scaleX(0.91);transform-origin:0 0;">11,556Mhz</div>
<div class="t" style="left:653px;top:673.84px;font-size:12px;color:#000;transform:scaleX(0.91);transform-origin:0 0;">14,224Mhz</div>
<div class="t" style="left:758px;top:673.84px;font-size:12px;color:#000;transform:scaleX(0.91);transform-origin:0 0;">16,834Mhz</div>
<div class="t" style="left:862px;top:673.84px;font-size:12px;color:#000;transform:scaleX(0.91);transform-origin:0 0;">19,502Mhz</div>
<div class="t" style="left:966px;top:673.84px;font-size:12px;color:#000;transform:scaleX(0.91);transform-origin:0 0;">22,112Mhz</div>
<div class="t" style="left:1070px;top:673.84px;font-size:12px;color:#000;transform:scaleX(0.91);transform-origin:0 0;">24,780Mhz</div>
<div class="t" style="left:1175px;top:673.84px;font-size:12px;color:#000;transform:scaleX(0.91);transform-origin:0 0;">27,448Mhz</div>
<div class="t" style="left:1276px;top:673.84px;font-size:12px;color:#000;transform:scaleX(0.91);transform-origin:0 0;">30,000Mhz</div>
</body></html>
